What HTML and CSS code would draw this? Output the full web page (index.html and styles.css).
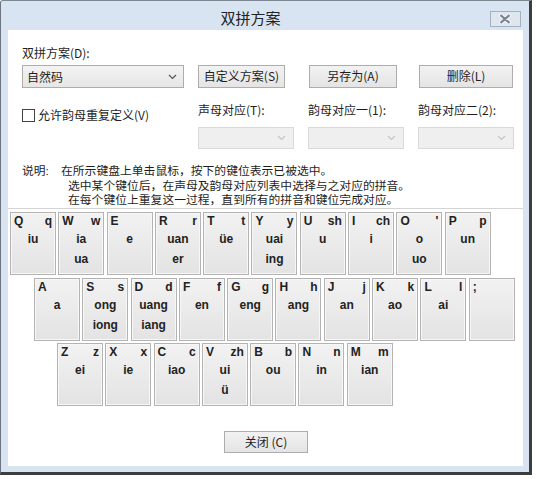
FILE: index.html
```html
<!DOCTYPE html>
<html lang="zh-CN">
<head>
    <meta charset="UTF-8">
    <title>双拼方案</title>
    <link rel="stylesheet" href="styles.css">
</head>
<body>
<div class="window">
    <div class="titlebar">
        <span class="title">双拼方案</span>
        <span class="close">
            <svg width="31" height="16" viewBox="0 0 31 16">
                <path d="M11.5 4.5 L19.5 11.5 M19.5 4.5 L11.5 11.5" stroke="#f4f7fa" stroke-width="4.2" stroke-linecap="round"/>
                <path d="M11.5 4.5 L19.5 11.5 M19.5 4.5 L11.5 11.5" stroke="#7b8694" stroke-width="2.2" stroke-linecap="round"/>
            </svg>
        </span>
    </div>
    <div class="client">
        <div class="form">
            <div class="lbl">双拼方案(D):</div>
            <div class="row1">
                <div class="combo"><span>自然码</span><svg width="9" height="6" viewBox="0 0 9 6"><path d="M1 1 L4.5 4.5 L8 1" fill="none" stroke="#555" stroke-width="1.2"/></svg></div>
                <div class="btn b1">自定义方案(S)</div>
                <div class="btn b2">另存为(A)</div>
                <div class="btn b3">删除(L)</div>
            </div>
            <div class="row2">
                <div class="check"><span class="box"></span>允许韵母重复定义(V)</div>
                <div class="field">
                    <div class="lbl">声母对应(T):</div>
                    <div class="combo off"><svg width="9" height="6" viewBox="0 0 9 6"><path d="M1 1 L4.5 4.5 L8 1" fill="none" stroke="#c4c4c4" stroke-width="1.2"/></svg></div>
                </div>
                <div class="field">
                    <div class="lbl">韵母对应一(1):</div>
                    <div class="combo off"><svg width="9" height="6" viewBox="0 0 9 6"><path d="M1 1 L4.5 4.5 L8 1" fill="none" stroke="#c4c4c4" stroke-width="1.2"/></svg></div>
                </div>
                <div class="field">
                    <div class="lbl">韵母对应二(2):</div>
                    <div class="combo off"><svg width="9" height="6" viewBox="0 0 9 6"><path d="M1 1 L4.5 4.5 L8 1" fill="none" stroke="#c4c4c4" stroke-width="1.2"/></svg></div>
                </div>
            </div>
            <div class="note">
                <span class="head">说明:</span>
                <div class="lines">
                    <p>在所示键盘上单击鼠标，按下的键位表示已被选中。</p>
                    <p class="ind">选中某个键位后，在声母及韵母对应列表中选择与之对应的拼音。</p>
                    <p class="ind">在每个键位上重复这一过程，直到所有的拼音和键位完成对应。</p>
                </div>
            </div>
        </div>

        <div class="keyboard">
            <div class="krow">
                <div class="key"><div class="cap"><b>Q</b><b>q</b></div><div class="yun">iu</div></div>
                <div class="key"><div class="cap"><b>W</b><b>w</b></div><div class="yun">ia<br>ua</div></div>
                <div class="key"><div class="cap"><b>E</b><b></b></div><div class="yun">e</div></div>
                <div class="key"><div class="cap"><b>R</b><b>r</b></div><div class="yun">uan<br>er</div></div>
                <div class="key"><div class="cap"><b>T</b><b>t</b></div><div class="yun">üe</div></div>
                <div class="key"><div class="cap"><b>Y</b><b>y</b></div><div class="yun">uai<br>ing</div></div>
                <div class="key"><div class="cap"><b>U</b><b>sh</b></div><div class="yun">u</div></div>
                <div class="key"><div class="cap"><b>I</b><b>ch</b></div><div class="yun">i</div></div>
                <div class="key"><div class="cap"><b>O</b><b>'</b></div><div class="yun">o<br>uo</div></div>
                <div class="key"><div class="cap"><b>P</b><b>p</b></div><div class="yun">un</div></div>
            </div>
            <div class="krow r2">
                <div class="key"><div class="cap"><b>A</b><b></b></div><div class="yun">a</div></div>
                <div class="key"><div class="cap"><b>S</b><b>s</b></div><div class="yun">ong<br>iong</div></div>
                <div class="key"><div class="cap"><b>D</b><b>d</b></div><div class="yun">uang<br>iang</div></div>
                <div class="key"><div class="cap"><b>F</b><b>f</b></div><div class="yun">en</div></div>
                <div class="key"><div class="cap"><b>G</b><b>g</b></div><div class="yun">eng</div></div>
                <div class="key"><div class="cap"><b>H</b><b>h</b></div><div class="yun">ang</div></div>
                <div class="key"><div class="cap"><b>J</b><b>j</b></div><div class="yun">an</div></div>
                <div class="key"><div class="cap"><b>K</b><b>k</b></div><div class="yun">ao</div></div>
                <div class="key"><div class="cap"><b>L</b><b>l</b></div><div class="yun">ai</div></div>
                <div class="key"><div class="cap"><b>;</b><b></b></div><div class="yun"></div></div>
            </div>
            <div class="krow r3">
                <div class="key"><div class="cap"><b>Z</b><b>z</b></div><div class="yun">ei</div></div>
                <div class="key"><div class="cap"><b>X</b><b>x</b></div><div class="yun">ie</div></div>
                <div class="key"><div class="cap"><b>C</b><b>c</b></div><div class="yun">iao</div></div>
                <div class="key"><div class="cap"><b>V</b><b>zh</b></div><div class="yun">ui<br>ü</div></div>
                <div class="key"><div class="cap"><b>B</b><b>b</b></div><div class="yun">ou</div></div>
                <div class="key"><div class="cap"><b>N</b><b>n</b></div><div class="yun">in</div></div>
                <div class="key"><div class="cap"><b>M</b><b>m</b></div><div class="yun">ian</div></div>
            </div>
        </div>

        <div class="footer">
            <div class="btn closebtn">关闭 (C)</div>
        </div>
    </div>
</div>
</body>
</html>
```

FILE: styles.css
```css
body{
    margin: 0;
    background: #fff;
    font-family: "Noto Sans CJK SC", "Noto Sans", sans-serif;
    font-size: 12px;
    color: #1e1e1e;
}
.window{
    width: 532px;
    height: 475px;
    box-sizing: border-box;
    background: #d8e4f1;
    border-top: 1px solid #7d8792;
    border-left: 1px solid #6d7580;
    border-right: 3px solid #3d3d3d;
    border-bottom: 3px solid #3d3d3d;
    border-top-left-radius: 3px;
}
.titlebar{
    height: 29px;
    display: flex;
}
.title{
    flex: 1;
    text-align: center;
    padding-left: 10px;
    padding-top: 7px;
    font-size: 15px;
    line-height: 20px;
    color: #222;
}
.close{
    width: 29px;
    height: 14px;
    margin-top: 10px;
    margin-right: 8px;
    border: 1px solid #a5b1bf;
    background: #dfe6ee;
    display: flex;
    align-items: center;
    justify-content: center;
}
.close svg{ display: block; margin-left: -1px; }
.client{
    height: 436px;
    margin: 0 6px 0 7px;
    background: #fff;
}
.form{
    padding: 15px 0 0 14px;
}
.lbl{
    line-height: 16px;
    height: 16px;
    white-space: nowrap;
}
.row1{
    display: flex;
    margin-top: 4px;
    height: 23px;
}
.combo{
    box-sizing: border-box;
    height: 23px;
    width: 162px;
    flex: none;
    border: 1px solid #adadad;
    background: linear-gradient(#f3f3f3, #e6e6e6);
    display: flex;
    align-items: center;
    justify-content: space-between;
    padding: 0 6px 0 4px;
}
.combo span{ line-height: 16px; }
.btn{
    box-sizing: border-box;
    height: 23px;
    flex: none;
    border: 1px solid #adadad;
    background: linear-gradient(#f2f2f2, #e4e4e4);
    text-align: center;
    line-height: 20px;
    white-space: nowrap;
}
.b1{ width: 87px; margin-left: 14px; }
.b2{ width: 88px; margin-left: 24px; }
.b3{ width: 94px; margin-left: 22px; }
.row2{
    display: flex;
    margin-top: 14px;
}
.check{
    flex: none;
    width: 176px;
    align-self: flex-start;
    margin-top: 5px;
    line-height: 16px;
    display: flex;
    align-items: center;
    white-space: nowrap;
}
.box{
    width: 11px;
    height: 11px;
    border: 1px solid #444;
    background: #fff;
    margin-right: 3px;
}
.field{
    flex: none;
    width: 110px;
}
.combo.off{
    width: 96px;
    height: 22px;
    margin-top: 9px;
    border-color: #d9d9d9;
    background: #efefef;
    justify-content: flex-end;
    padding-right: 7px;
}
.note{
    display: flex;
    margin-top: 15px;
    line-height: 14.5px;
    font-family: "Liberation Sans", "Noto Sans CJK SC", sans-serif;
    font-size: 11.8px;
}
.head{
    width: 39px;
}
.lines p{
    margin: 0;
    white-space: nowrap;
}
.lines .ind{
    padding-left: 7px;
}
.keyboard{
    margin-top: 0.5px;
    border-top: 1px solid #d4d4d4;
    padding: 3px 0 0 2px;
}
.krow{
    display: flex;
    gap: 2.3px;
}
.krow + .krow{
    margin-top: 2.5px;
}
.r2{ padding-left: 24px; }
.r3{ padding-left: 47px; }
.key{
    box-sizing: border-box;
    width: 46px;
    height: 63px;
    border: 1px solid #b3b3b3;
    background: linear-gradient(#f2f2f2, #e3e3e3);
    box-shadow: inset 0 0 0 1px #f7f7f7;
    font-family: "Liberation Sans", Arial, sans-serif;
    font-weight: bold;
    font-size: 12px;
    color: #222;
}
.cap{
    display: flex;
    justify-content: space-between;
    padding: 0 3px 0 3px;
    margin-top: 1px;
    line-height: 14px;
    height: 14px;
}
.yun{
    margin-top: 1px;
    text-align: center;
    line-height: 20px;
}
.footer{
    display: flex;
    justify-content: center;
    margin-top: 25px;
}
.closebtn{
    width: 84px;
    height: 22px;
    line-height: 19px;
    margin-left: 1px;
}
```
